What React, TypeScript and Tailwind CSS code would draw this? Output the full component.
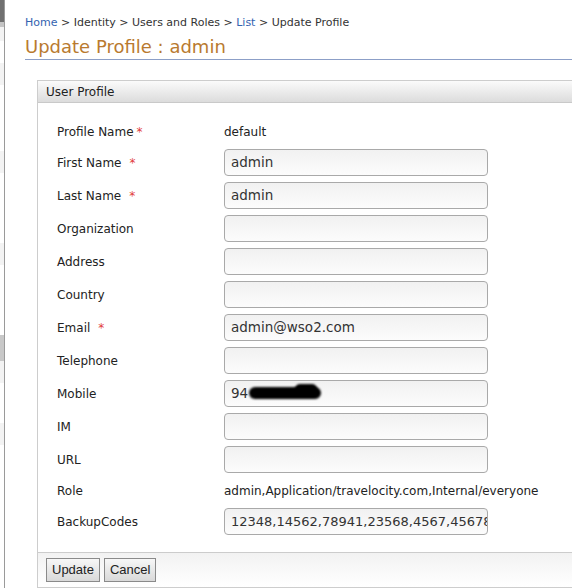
import React from "react";

const font = { fontFamily: '"DejaVu Sans", Verdana, sans-serif' };

function Field({ value, small, children }: { value?: string; small?: boolean; children?: React.ReactNode }) {
  return (
    <div
      className={
        "relative h-[27px] w-[264px] overflow-hidden whitespace-nowrap rounded-[4px] border border-[#a9a9a9] bg-gradient-to-b from-[#f1f1f1] to-[#fcfcfc] pl-[6px] leading-[25px] text-[#333] " +
        (small ? "text-[13px]" : "text-[13.5px]")
      }
    >
      {value}
      {children}
    </div>
  );
}

function Label({ text, req, gap }: { text: string; req?: boolean; gap?: boolean }) {
  return (
    <div className="w-[167px] shrink-0 text-[12px] text-[#222]">
      {text}
      {req && <span className={gap ? "ml-[8px] text-[#e23c3c]" : "ml-[3px] text-[#e23c3c]"}>*</span>}
    </div>
  );
}

function InputRow({ label, value, req, small, children }: { label: string; value?: string; req?: boolean; small?: boolean; children?: React.ReactNode }) {
  return (
    <div className="flex h-[33px] items-center">
      <Label text={label} req={req} gap />
      <Field value={value} small={small}>{children}</Field>
    </div>
  );
}

function TextRow({ label, value, req }: { label: string; value: string; req?: boolean }) {
  return (
    <div className="flex h-[29px] items-center">
      <Label text={label} req={req} />
      <div className="whitespace-nowrap text-[12px] text-[#222]">{value}</div>
    </div>
  );
}

export default function App() {
  return (
    <div className="flex h-[588px] w-[572px] overflow-hidden bg-white" style={font}>
      <div className="flex w-[4px] shrink-0 flex-col">
        <div className="h-[22px] bg-[#707070]" />
        <div className="h-[5px] bg-[#c4c4c4]" />
        <div className="h-[14px] bg-[#f3f3f3]" />
        <div className="h-[22px] bg-white" />
        <div className="h-[22px] bg-[#f3f3f3]" />
        <div className="h-[66px] bg-white" />
        <div className="h-[22px] bg-[#f3f3f3]" />
        <div className="h-[70px] bg-white" />
        <div className="h-[22px] bg-[#f3f3f3]" />
        <div className="h-[70px] bg-white" />
        <div className="h-[26px] bg-[#c8c8c8]" />
        <div className="h-[22px] bg-[#f3f3f3]" />
        <div className="h-[40px] bg-white" />
        <div className="h-[22px] bg-[#f3f3f3]" />
        <div className="flex-1 bg-white" />
      </div>
      <div className="w-px shrink-0 bg-[#9a9a9a]" />
      <div className="flex-1 pl-[20px]">
        <div className="pt-[16px] text-[11px] leading-[14px] text-[#333] whitespace-nowrap">
          <span className="text-[#3463b0]">Home</span> &gt; Identity &gt; Users and Roles &gt;{" "}
          <span className="text-[#3463b0]">List</span> &gt; Update Profile
        </div>
        <div className="mt-[5px] h-[25px] w-[600px] whitespace-nowrap border-b border-[#8c9fc7] text-[18px] leading-[23px] text-[#b97a2f]">
          Update Profile : admin
        </div>
        <div className="ml-[12px] mt-[20px] w-[560px] border border-[#cdcdcd]">
          <div className="h-[22px] border-b border-[#c9c9c9] bg-gradient-to-b from-[#fbfbfb] to-[#dcdcdc] pl-[8px] text-[12px] leading-[22px] text-[#222]">
            User Profile
          </div>
          <div className="pb-[14px] pl-[19px] pt-[14px]">
            <TextRow label="Profile Name" value="default" req />
            <InputRow label="First Name" value="admin" req />
            <InputRow label="Last Name" value="admin" req />
            <InputRow label="Organization" />
            <InputRow label="Address" />
            <InputRow label="Country" />
            <InputRow label="Email" value="admin@wso2.com" req />
            <InputRow label="Telephone" />
            <InputRow label="Mobile" value="94">
              <div className="absolute left-[24px] top-[6px] h-[12px] w-[72px] rounded-full bg-black blur-[1px]" />
              <div className="absolute left-[70px] top-[3px] h-[10px] w-[22px] rounded-full bg-black blur-[1px]" />
            </InputRow>
            <InputRow label="IM" />
            <InputRow label="URL" />
            <TextRow label="Role" value="admin,Application/travelocity.com,Internal/everyone" />
            <InputRow label="BackupCodes" value="12348,14562,78941,23568,4567,45678" small />
          </div>
          <div className="flex gap-[4px] border-t border-[#cccccc] bg-gradient-to-b from-[#f2f2f2] to-white px-[8px] py-[5px]">
            {["Update", "Cancel"].map((t) => (
              <div
                key={t}
                className="flex h-[24px] items-center border border-[#8a8a8a] bg-gradient-to-b from-[#f7f7f7] to-[#d9d9d9] px-[5px] text-[13px] text-[#222]"
                style={{ fontFamily: '"Liberation Sans", Arial, sans-serif' }}
              >
                {t}
              </div>
            ))}
          </div>
        </div>
      </div>
    </div>
  );
}
